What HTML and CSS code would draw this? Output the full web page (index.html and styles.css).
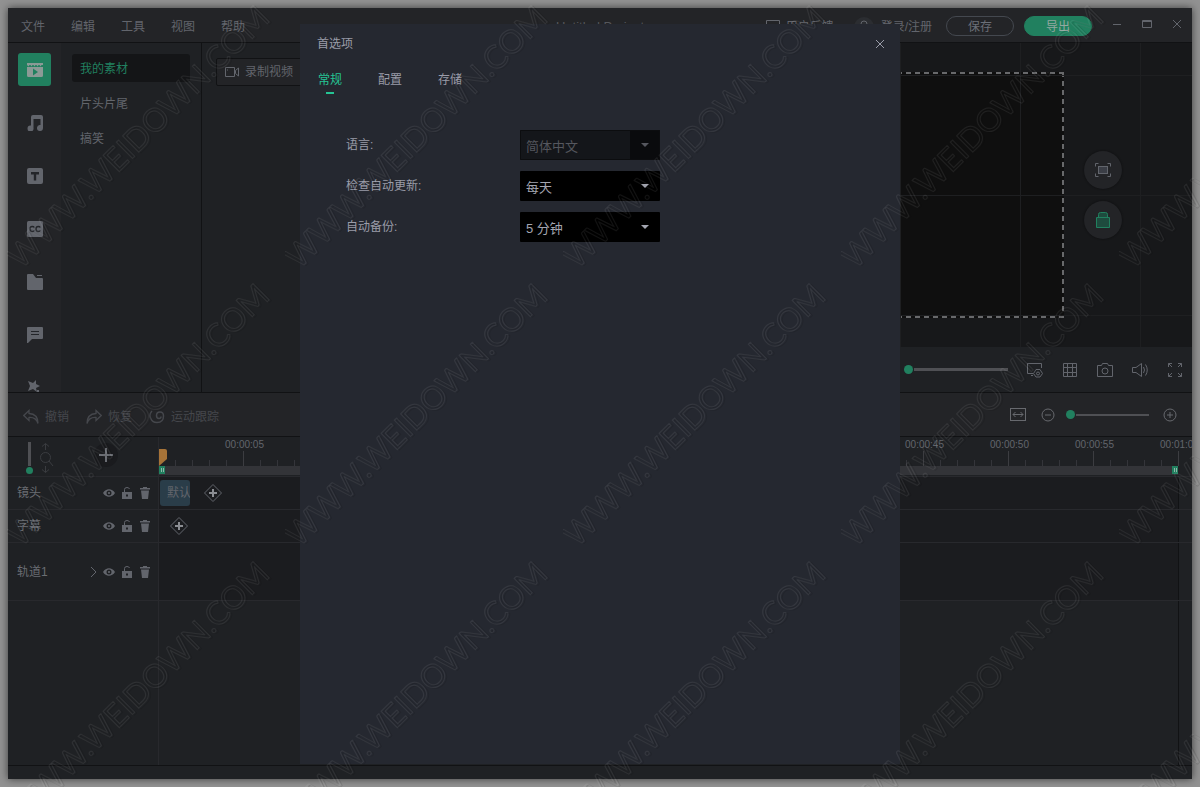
FILE: index.html
```html
<!DOCTYPE html>
<html lang="zh-CN">
<head>
<meta charset="utf-8">
<title>首选项</title>
<link rel="stylesheet" href="styles.css">
</head>
<body>
<svg class="defs" width="0" height="0" aria-hidden="true">
  <symbol id="eye" viewBox="0 0 12 12"><path fill="currentColor" fill-rule="evenodd" d="M0 6C3 1 9 1 12 6C9 11 3 11 0 6ZM6 3.500A2.500 2.500 0 1 0 6 8.500A2.500 2.500 0 1 0 6 3.500ZM6 4.900A1.100 1.100 0 1 1 6 7.100A1.100 1.100 0 1 1 6 4.900Z"/></symbol>
  <symbol id="unlock" viewBox="0 0 12 12"><path fill="none" stroke="currentColor" d="M3.500 5V2.500Q3.500 .5 6 .5Q8 .5 8.500 2"/><path fill="currentColor" fill-rule="evenodd" d="M1 5H11V12H1ZM5 7.500V9.500H7V7.500Z"/></symbol>
  <symbol id="trash" viewBox="0 0 12 12"><path fill="currentColor" d="M1 1H4V0H8V1H11V2.500H1ZM2 3.500H10L9 12H3Z"/></symbol>
  <symbol id="addkey" viewBox="0 0 20 20"><path fill="none" stroke="currentColor" d="M10 1.500L18.500 10L10 18.500L1.500 10Z"/><path fill="none" stroke="#8b8d92" stroke-width="2" d="M6 10H14M10 6V14"/></symbol>
</svg>

<div class="window">
  <header class="titlebar">
    <nav class="menu">
      <button>文件</button><button>编辑</button><button>工具</button><button>视图</button><button>帮助</button>
    </nav>
    <div class="project">Untitled Project</div>
    <div class="account">
      <button class="feedback">
        <svg width="14" height="14" viewBox="0 0 14 14" fill="none" stroke="currentColor"><path d="M.5 .5H13.500V11.500H8L6 13.500V11.500H.5ZM3.500 4.500H10.500M3.500 7.500H8.500"/></svg>
        用户反馈
      </button>
      <button class="login">
        <svg width="20" height="20" viewBox="0 0 20 20"><circle cx="10" cy="10" r="10" fill="#2b2d31"/><g fill="none" stroke="currentColor"><circle cx="10" cy="7" r="3"/><path d="M4.500 15.500Q5 11 10 11T15.500 15.500"/></g></svg>
        登录/注册
      </button>
      <button class="pill">保存</button>
      <button class="pill primary">导出</button>
      <div class="winctl">
        <button aria-label="最小化"><svg width="10" height="10" fill="none" stroke="currentColor"><path d="M1 5.500H9"/></svg></button>
        <button aria-label="最大化"><svg width="10" height="10" fill="none" stroke="currentColor"><path d="M.5 1.500H9.500V8.500H.5ZM.5 2.500H9.500"/></svg></button>
        <button aria-label="关闭窗口"><svg width="10" height="10" fill="none" stroke="currentColor"><path d="M1 1L9 9M9 1L1 9"/></svg></button>
      </div>
    </div>
  </header>

  <main class="workspace">
    <nav class="rail">
      <button class="active" aria-label="媒体"><svg width="16" height="16"><path fill="#8b9a96" d="M0 1H16V3H14.500L13.500 4.500L12.500 3H11.500L10.500 4.500L9.500 3H8.500L7.500 4.500L6.500 3H5.500L4.500 4.500L3.500 3H2.500L1.500 4.500L0 3ZM0 5H16V13.500Q16 15 14.500 15H1.500Q0 15 0 13.500Z"/><path fill="#20805f" d="M6 6.500L11 10L6 13.500Z"/></svg></button>
      <button aria-label="音频"><svg width="16" height="16"><path fill="currentColor" d="M4 2Q4 0 6 0H14Q16 0 16 2V13A3 3 0 1 1 13.500 10V4H6.500V13A3 3 0 1 1 4 10.500Z"/></svg></button>
      <button aria-label="文字"><svg width="16" height="16"><rect width="16" height="16" rx="2" fill="currentColor"/><path fill="#232529" d="M4 4H12V6.500H9.200V12.500H6.800V6.500H4Z"/></svg></button>
      <button aria-label="字幕"><svg width="16" height="16"><rect width="16" height="16" rx="1.500" fill="currentColor"/><path fill="none" stroke="#232529" stroke-width="1.300" d="M7.300 6.500Q6.800 5.500 5.200 5.500Q3 5.500 3 8T5.200 10.500Q6.800 10.500 7.300 9.500M13.300 6.500Q12.800 5.500 11.200 5.500Q9 5.500 9 8T11.200 10.500Q12.800 10.500 13.300 9.500"/></svg></button>
      <button aria-label="文件夹"><svg width="16" height="16"><path fill="currentColor" d="M1 0H6L9 4H15Q16 4 16 5V15Q16 16 15 16H1Q0 16 0 15V1Q0 0 1 0ZM10 1H15V2H10Z"/></svg></button>
      <button aria-label="批注"><svg width="16" height="16"><path fill="currentColor" d="M1 0H15Q16 0 16 1V11Q16 12 15 12H5L1 16H0V1Q0 0 1 0Z"/><path stroke="#232529" d="M4 4.500H12M4 7.500H12"/></svg></button>
      <button aria-label="特效"><svg width="16" height="16"><path fill="currentColor" d="M1 1L6 3L9 0L9 4L13 6L9 8L10 12L6 9L1 11L3 6ZM10 10H12V12H14V14H10Z"/></svg></button>
    </nav>
    <nav class="categories">
      <button class="active">我的素材</button><button>片头片尾</button><button>搞笑</button>
    </nav>
    <section class="library">
      <button class="record"><svg width="14" height="12" fill="none" stroke="currentColor"><path d="M.5 1.500H9.500V10.500H.5ZM2 4H3M13.500 2V10L10.500 7.500V4.500L13.500 2"/></svg>录制视频</button>
    </section>
    <section class="preview">
      <div class="stage">
        <div class="canvas"></div>
        <div class="floaters">
          <button aria-label="适应画布"><svg width="16" height="14" fill="none" stroke="currentColor"><path d="M.5 3.500V.5H3.500M12.500 .5H15.500V3.500M15.500 10.500V13.500H12.500M3.500 13.500H.5V10.500"/><rect x="3.500" y="3.500" width="9" height="7" fill="#3b3e46"/></svg></button>
          <button class="lock" aria-label="锁定"><svg width="14" height="16" fill="#1e4b3e" stroke="currentColor"><path d="M2.500 6V2.500Q2.500 .5 4.500 .5H9.500Q11.500 .5 11.500 2.500V6M.5 5.500H13.500V15.500H.5Z"/></svg></button>
        </div>
      </div>
      <div class="player">
        <input class="slider volume" type="range" value="0" aria-label="音量">
        <button aria-label="显示设置"><svg width="16" height="16" fill="none" stroke="currentColor"><path d="M4 13.500H6M6 11.500H.5V1.500H14.500V6"/><path d="M9 7.500H13L15.500 11.500L13 15H9L6.500 11.500Z"/><circle cx="11" cy="11.500" r="1.500"/></svg></button>
        <button aria-label="网格"><svg width="16" height="16" fill="none" stroke="currentColor"><path d="M1.500 1.500H14.500V14.500H1.500ZM5.500 1.500V14.500M10.500 1.500V14.500M1.500 5.500H14.500M1.500 10.500H14.500"/></svg></button>
        <button aria-label="截图"><svg width="16" height="16" fill="none" stroke="currentColor"><path d="M.5 3.500H4.500L5.500 1.500H10.500L11.500 3.500H15.500V14.500H.5Z"/><circle cx="8" cy="9" r="3"/></svg></button>
        <button aria-label="静音"><svg width="16" height="16" fill="none" stroke="currentColor"><path d="M.5 5.500H4L9.500 1.500V14.500L4 10.500H.5ZM11.500 5Q13.500 8 11.500 11M13.500 2.500Q17 8 13.500 13.500"/></svg></button>
        <button aria-label="全屏"><svg width="16" height="16" fill="none" stroke="currentColor"><path d="M1.500 5V1.500H5M1.500 1.500L5 5M11 1.500H14.500V5M14.500 1.500L11 5M14.500 11V14.500H11M14.500 14.500L11 11M5 14.500H1.500V11M1.500 14.500L5 11"/></svg></button>
      </div>
    </section>
  </main>

  <div class="toolbar">
    <button><svg width="16" height="16" fill="none" stroke="currentColor" stroke-width="1.300"><path d="M6 1.500L.8 6.500L6 11.500V8.500Q13 8 15 14.500Q15 5 6 4.500Z"/></svg>撤销</button>
    <button><svg width="16" height="16" fill="none" stroke="currentColor" stroke-width="1.300"><path d="M10 1.500L15.200 6.500L10 11.500V8.500Q3 8 1 14.500Q1 5 10 4.500Z"/></svg>恢复</button>
    <button><svg width="16" height="16" fill="none" stroke="currentColor" stroke-width="1.500"><path d="M3 2Q0 5 1.500 9Q3 13.500 8 13.500Q14.500 13.500 14.500 7Q14.500 3 11 3Q7.500 3 7.500 6.500Q7.500 9.500 10 9.500Q12 9.500 12 7.500"/></svg>运动跟踪</button>
    <div class="zoom">
      <button aria-label="缩放至适合"><svg width="16" height="14" fill="none" stroke="currentColor"><rect x=".5" y=".5" width="15" height="12"/><path d="M3 6.500H13M5.500 4L3 6.500L5.500 9M10.500 4L13 6.500L10.500 9"/></svg></button>
      <button aria-label="缩小"><svg width="14" height="14" fill="none" stroke="currentColor"><circle cx="7" cy="7" r="6"/><path d="M4 7H10"/></svg></button>
      <input class="slider scale" type="range" value="0" aria-label="缩放">
      <button aria-label="放大"><svg width="14" height="14" fill="none" stroke="currentColor"><circle cx="7" cy="7" r="6"/><path d="M4 7H10M7 4V10"/></svg></button>
    </div>
  </div>

  <section class="timeline">
    <div class="row head">
      <div class="headtools">
        <input class="slider upright" type="range" value="0" aria-label="轨道高度">
        <svg class="height" width="16" height="32" fill="none" stroke="currentColor"><path d="M7.500 8V1.500M4 4.500L7.500 1.500L11 4.500M7.500 24V30.500M4 27.500L7.500 30.500L11 27.500M11 19L15 24"/><circle cx="7.500" cy="15.500" r="5"/></svg>
        <button class="addtrack" aria-label="添加轨道"><svg width="14" height="14" stroke="currentColor" stroke-width="2"><path d="M0 7H14M7 0V14"/></svg></button>
      </div>
      <div class="ruler">
        <div class="ticks">
          <div><span>00:00:05</span></div><div><span>00:00:10</span></div><div><span>00:00:15</span></div><div><span>00:00:20</span></div><div><span>00:00:25</span></div><div><span>00:00:30</span></div><div><span>00:00:35</span></div><div><span>00:00:40</span></div><div><span>00:00:45</span></div><div><span>00:00:50</span></div><div><span>00:00:55</span></div><div><span>00:01:00</span></div>
        </div>
        <div class="range"><i></i><i></i></div>
        <svg class="playhead" width="8" height="17"><path fill="#a67338" d="M0 0H6Q8 0 8 2V10L0 17Z"/></svg>
      </div>
    </div>
    <div class="row">
      <div class="label"><span>镜头</span>
        <button aria-label="显示镜头"><svg width="12" height="12"><use href="#eye"/></svg></button><button aria-label="锁定镜头"><svg width="12" height="12"><use href="#unlock"/></svg></button><button aria-label="删除镜头"><svg width="12" height="12"><use href="#trash"/></svg></button></div>
      <div class="lane"><div class="clip">默认</div><button aria-label="添加镜头"><svg width="20" height="20"><use href="#addkey"/></svg></button></div>
    </div>
    <div class="row">
      <div class="label"><span>字幕</span>
        <button aria-label="显示字幕"><svg width="12" height="12"><use href="#eye"/></svg></button><button aria-label="锁定字幕"><svg width="12" height="12"><use href="#unlock"/></svg></button><button aria-label="删除字幕"><svg width="12" height="12"><use href="#trash"/></svg></button></div>
      <div class="lane captions"><button aria-label="添加字幕"><svg width="20" height="20"><use href="#addkey"/></svg></button></div>
    </div>
    <div class="row tall">
      <div class="label"><span>轨道1</span>
        <button aria-label="展开轨道1"><svg width="8" height="12" fill="none" stroke="currentColor"><path d="M2 1L7 6L2 11"/></svg></button><button aria-label="显示轨道1"><svg width="12" height="12"><use href="#eye"/></svg></button><button aria-label="锁定轨道1"><svg width="12" height="12"><use href="#unlock"/></svg></button><button aria-label="删除轨道1"><svg width="12" height="12"><use href="#trash"/></svg></button></div>
      <div class="lane"></div>
    </div>
    <div class="row rest"><div></div><div class="lane"></div></div>
  </section>
  <footer class="status"></footer>

  <div class="overlay">
    <section class="dialog" role="dialog" aria-labelledby="dlg-title">
      <header>
        <h1 id="dlg-title">首选项</h1>
        <button aria-label="关闭"><svg width="10" height="10" fill="none" stroke="currentColor"><path d="M1 1L9 9M9 1L1 9"/></svg></button>
      </header>
      <div class="tabs" role="tablist">
        <button role="tab" aria-selected="true">常规</button><button role="tab" aria-selected="false">配置</button><button role="tab" aria-selected="false">存储</button>
      </div>
      <form class="form">
        <label for="lang">语言:</label>
        <div class="select off"><select id="lang" disabled><option>简体中文</option></select><svg width="8" height="4"><path fill="currentColor" d="M0 0H8L4 4Z"/></svg></div>
        <label for="update">检查自动更新:</label>
        <div class="select"><select id="update"><option>每天</option></select><svg width="8" height="4"><path fill="currentColor" d="M0 0H8L4 4Z"/></svg></div>
        <label for="backup">自动备份:</label>
        <div class="select"><select id="backup"><option>5 分钟</option></select><svg width="8" height="4"><path fill="currentColor" d="M0 0H8L4 4Z"/></svg></div>
      </form>
    </section>
  </div>
</div>

<svg class="watermark" aria-hidden="true">
  <defs>
    <pattern id="wm" x="7" y="4" width="278" height="278" patternUnits="userSpaceOnUse">
      <g transform="translate(139 141) rotate(-45)" fill="none" text-anchor="middle" stroke-linejoin="round">
        <text x="1" y="2" stroke="#000" stroke-opacity=".1">WWW.WEIDOWN.COM</text>
        <text stroke="#fff" stroke-opacity=".07">WWW.WEIDOWN.COM</text>
      </g>
    </pattern>
  </defs>
  <rect width="100%" height="100%" fill="url(#wm)"/>
</svg>
</body>
</html>
```

FILE: styles.css
```css
* { box-sizing: border-box; }

body {
  margin: 0;
  height: 100vh;
  padding: 8px;
  overflow: hidden;
  background: #929292;
  color: #62656c;
  font: 12px/18px "Liberation Sans", "Noto Sans CJK SC", sans-serif;
}

button {
  margin: 0;
  padding: 0;
  border: 0;
  background: none;
  color: inherit;
  font: inherit;
  display: flex;
  align-items: center;
  justify-content: center;
  white-space: nowrap;
}

svg { display: block; flex: none; }
.defs { position: absolute; }

.window {
  position: relative;
  height: 100%;
  display: flex;
  flex-direction: column;
  background: #1f2124;
  box-shadow: 0 0 8px rgba(0, 0, 0, .6);
}

/* Title bar */
.titlebar {
  flex: none;
  height: 35px;
  display: grid;
  grid-template-columns: 1fr auto 1fr;
  align-items: center;
  padding-top: 2px;
  background: #232427;
  border-bottom: 1px solid #111214;
}
.menu { display: flex; gap: 26px; padding: 2px 0 0 13px; }
.project { padding-top: 2px; font-size: 13px; color: #55575c; }
.account { display: flex; align-items: center; justify-content: flex-end; padding-right: 10px; }
.feedback { gap: 6px; margin-right: 20px; padding-top: 2px; }
.login { gap: 7px; margin-right: 14px; padding-top: 1px; }
.pill {
  width: 68px;
  height: 20px;
  padding-top: 2px;
  margin-right: 10px;
  border: 1px solid #44484f;
  border-radius: 10px;
  color: #6b6f77;
}
.pill.primary { background: #21805f; border-color: #21805f; color: #93a8a1; margin-right: 20px; }
.winctl { display: flex; gap: 20px; padding-bottom: 4px; }

/* Media and preview */
.workspace {
  flex: 350 1 0;
  min-height: 0;
  display: grid;
  grid-template-columns: 53px 141px 3fr 7fr;
  grid-template-rows: minmax(0, 1fr);
  border-bottom: 1px solid #111214;
}
.rail {
  display: flex;
  flex-direction: column;
  align-items: center;
  gap: 20px;
  padding-top: 10px;
  overflow: hidden;
  background: #232427;
}
.rail button { flex: none; width: 33px; height: 33px; border-radius: 3px; }
.rail .active { background: #21805f; }
.categories {
  display: flex;
  flex-direction: column;
  gap: 7px;
  padding: 11px;
  border-right: 1px solid #111214;
}
.categories button { height: 28px; padding: 2px 8px 0; border-radius: 3px; justify-content: flex-start; }
.categories .active { background: #141517; color: #21805f; }
.library { padding: 15px 14px; }
.record {
  height: 28px;
  padding: 0 8px;
  gap: 6px;
  border: 1px solid #111214;
  border-radius: 2px;
  background: #232427;
}
.preview { display: flex; flex-direction: column; min-width: 0; }
.stage {
  flex: 1;
  position: relative;
  display: flex;
  align-items: center;
  justify-content: center;
  background: #17181a;
}
.stage::after {
  content: "";
  position: absolute;
  inset: 0;
  background:
    repeating-linear-gradient(to left, transparent 0 51px, #1e1f21 51px 52px, transparent 52px 120px),
    repeating-linear-gradient(transparent 0 32px, #1e1f21 32px 33px, transparent 33px 120px);
  pointer-events: none;
}
.canvas {
  height: 246px;
  aspect-ratio: 16 / 9;
  background:
    repeating-linear-gradient(to right, #68696b 0 5px, transparent 5px 9px) top / 100% 2px no-repeat,
    repeating-linear-gradient(to right, #68696b 0 5px, transparent 5px 9px) bottom / 100% 2px no-repeat,
    repeating-linear-gradient(#68696b 0 5px, transparent 5px 9px) left / 2px 100% no-repeat,
    repeating-linear-gradient(#68696b 0 5px, transparent 5px 9px) right / 2px 100% no-repeat,
    #0f0f0f;
}
.floaters {
  position: absolute;
  z-index: 1;
  right: 70px;
  top: 108px;
  display: grid;
  gap: 12px;
}
.floaters button {
  width: 38px;
  height: 38px;
  border-radius: 50%;
  background: #232427;
  box-shadow: 0 0 2px #0c0c0d;
}
.floaters .lock { color: #21805f; }
.player {
  height: 45px;
  display: flex;
  align-items: center;
  justify-content: flex-end;
  gap: 19px;
  padding-right: 9px;
}

/* Sliders */
.slider { appearance: none; margin: 0; height: 10px; background: transparent; }
.slider::-webkit-slider-runnable-track {
  height: 2px;
  background: linear-gradient(to right, transparent 10px, #4f5054 10px);
}
.slider::-webkit-slider-thumb {
  appearance: none;
  width: 9px;
  height: 9px;
  margin-top: -4px;
  border-radius: 50%;
  background: #21805f;
}
.volume { width: 104px; }
.volume::-webkit-slider-runnable-track { height: 3px; }
.volume::-webkit-slider-thumb { margin-top: -3px; }
.scale { width: 83px; }
.upright { writing-mode: vertical-lr; direction: rtl; width: 9px; height: 32px; }
.upright::-webkit-slider-runnable-track {
  width: 3px;
  height: 100%;
  background: linear-gradient(to top, transparent 8px, #4f5054 8px);
}
.upright::-webkit-slider-thumb { width: 7px; height: 7px; margin: 0 -2px; }

/* Toolbar */
.toolbar {
  flex: none;
  height: 44px;
  display: flex;
  align-items: center;
  gap: 17px;
  padding: 4px 15px 0;
  background: #232427;
  border-bottom: 1px solid #111214;
  color: #45474c;
}
.toolbar button { gap: 6px; }
.zoom { display: flex; align-items: center; gap: 15px; margin-left: auto; padding-bottom: 4px; color: #67696e; }
.zoom .scale { margin: 0 -1px 0 -4px; }

/* Timeline */
.timeline { flex: 328 1 0; min-height: 0; display: flex; flex-direction: column; }
.row {
  flex: none;
  height: 33px;
  display: grid;
  grid-template-columns: 150px 1fr;
  border-bottom: 1px solid #28292d;
}
.row.head { height: 40px; }
.row.tall { height: 58px; }
.row.rest { flex: 1; border-bottom: 0; }
.row > :last-child { border-left: 1px solid #28292d; }
.headtools { display: flex; align-items: center; padding-left: 17px; padding-top: 2px; }
.height { margin-left: 4px; color: #3a3c40; }
.addtrack {
  width: 24px;
  height: 24px;
  margin: 0 0 6px 40px;
  border-radius: 50%;
  background: #1a1b1e;
  color: #6a6d73;
}
.ruler { position: relative; overflow: hidden; }
.ticks { display: grid; grid-template-columns: repeat(12, 1fr); height: 29px; margin-right: 13px; }
.ticks div {
  display: flex;
  justify-content: flex-end;
  font: 10px/16px "Liberation Sans", sans-serif;
  background:
    linear-gradient(#3c3d41, #3c3d41) right bottom / 1px 15px no-repeat,
    repeating-linear-gradient(to left, #34353a 0 1px, transparent 1px 17px) right bottom / 100% 6px no-repeat;
}
.ticks span { margin-right: -20px; }
.range { display: flex; justify-content: space-between; height: 9px; margin-right: 14px; background: #333438; }
.range i {
  width: 6px;
  height: 8px;
  background:
    linear-gradient(to right, transparent 2px, #8fb5a8 2px 3px, transparent 3px 4px, #8fb5a8 4px 5px, transparent 5px) center / 100% 4px no-repeat,
    #21805f;
}
.playhead { position: absolute; left: 0; top: 12px; }
.label { display: flex; align-items: center; gap: 6px; padding: 0 7px 0 9px; }
.label span { margin-right: auto; color: #6a6d73; }
.lane {
  display: flex;
  align-items: center;
  gap: 13px;
  margin-right: 13px;
  padding-left: 1px;
  border-right: 1px solid #111214;
  background: #1b1c1f;
}
.lane.captions { padding-left: 10px; }
.rest .lane { background: none; }
.clip {
  width: 30px;
  height: 26px;
  padding-left: 7px;
  overflow: hidden;
  border-radius: 3px;
  background: #2a3d49;
  line-height: 26px;
  white-space: nowrap;
}
.status { flex: none; height: 14px; border-top: 1px solid #111214; }

/* Preferences dialog */
.overlay {
  position: absolute;
  inset: 16px 0 15px;
  display: flex;
  justify-content: center;
}
.dialog {
  width: 600px;
  max-width: 100%;
  padding: 11px 15px 0 17px;
  background: #252830;
  color: #9a9ca8;
}
.dialog header { display: flex; align-items: center; justify-content: space-between; }
.dialog h1 { margin: 0; font: inherit; }
.tabs { display: flex; gap: 36px; margin-top: 18px; padding-left: 1px; }
.tabs button { flex-direction: column; gap: 3px; height: 23px; justify-content: flex-start; }
.tabs [aria-selected="true"] { color: #25c494; }
.tabs [aria-selected="true"]::after { content: ""; width: 8px; height: 2px; background: #25c494; }
.form {
  display: grid;
  grid-template-columns: 174px 140px;
  row-gap: 11px;
  align-items: center;
  margin-top: 36px;
  padding-left: 29px;
}
.select { display: grid; align-items: center; background: #000; border-radius: 1px; }
.select > * { grid-area: 1 / 1; }
.select select {
  appearance: none;
  width: 100%;
  height: 30px;
  margin: 0;
  padding: 2px 30px 0 6px;
  border: 0;
  background: none;
  color: #a3a5b0;
  opacity: 1;
  font: 13px "Liberation Sans", "Noto Sans CJK SC", sans-serif;
}
.select svg { justify-self: end; margin-right: 11px; color: #a3a5b0; pointer-events: none; }
.select.off { background: linear-gradient(to left, #0a0b0d 30px, #14161a 30px); box-shadow: inset 0 0 0 1px #0c0d0f; }
.select.off select, .select.off svg { color: #55575e; }

.watermark {
  position: absolute;
  inset: 0;
  width: 100%;
  height: 100%;
  pointer-events: none;
  font: 32px Lato, sans-serif;
}
```
